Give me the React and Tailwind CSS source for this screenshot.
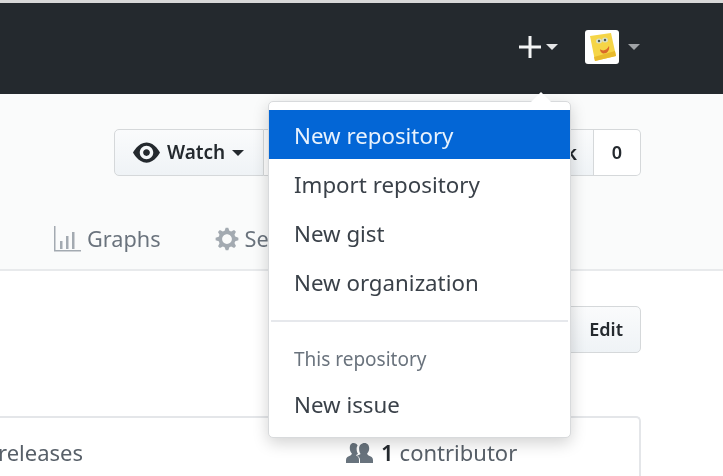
const font = { fontFamily: '"Noto Sans", "Open Sans", sans-serif' };

function Caret({ className }) {
  return <span className={"inline-block w-0 h-0 border-x-[6px] border-x-transparent border-t-[6px] " + className} />;
}

function Plus() {
  return (
    <svg width="22" height="22" viewBox="0 0 22 22" fill="#f4f5f5">
      <rect x="9.500" y="0" width="3" height="22" />
      <rect x="0" y="9.500" width="22" height="3" />
    </svg>
  );
}

function Eye() {
  return (
    <svg width="27" height="27" viewBox="0 0 16 16" fill="#24292e">
      <path d="M8.06 2C3 2 0 8 0 8s3 6 8.06 6C13 14 16 8 16 8s-3-6-7.94-6zM8 12c-2.2 0-4-1.78-4-4 0-2.2 1.8-4 4-4 2.22 0 4 1.8 4 4 0 2.22-1.78 4-4 4zm2-4c0 1.11-.89 2-2 2-1.11 0-2-.89-2-2 0-1.11.89-2 2-2 1.11 0 2 .89 2 2z" />
    </svg>
  );
}

function Bars() {
  return (
    <svg width="27" height="26" viewBox="0 0 27 26" fill="#a3aab1">
      <path d="M0 0h1.5v24H27v1.5H0z" />
      <rect x="6" y="15" width="2.5" height="8" />
      <rect x="12" y="10" width="2.5" height="13" />
      <rect x="18" y="6" width="2.5" height="17" />
    </svg>
  );
}

function Gear() {
  return (
    <svg width="24" height="26" viewBox="0 0 14 16" fill="#a3aab1">
      <path d="M14 8.77v-1.6l-1.94-.64-.45-1.09.88-1.84-1.13-1.13-1.81.91-1.09-.45-.69-1.92h-1.6l-.63 1.94-1.11.45-1.84-.88-1.13 1.13.91 1.81-.45 1.09L0 7.23v1.59l1.94.64.45 1.09-.88 1.84 1.13 1.13 1.81-.91 1.09.45.69 1.92h1.59l.63-1.94 1.11-.45 1.84.88 1.13-1.13-.92-1.81.47-1.09L14 8.75v.02zM7 11c-1.66 0-3-1.34-3-3s1.34-3 3-3 3 1.34 3 3-1.34 3-3 3z" />
    </svg>
  );
}

function People() {
  return (
    <svg width="27" height="22" viewBox="0 0 27 22" fill="#68737d">
      <path d="M18.500 1c3 0 4.700 2.300 4.700 5.300 0 2.500-.9 4-2 5 0 1.200.4 1.700 1.400 2.100 2.200.9 4.400 1.900 4.400 4.600V21H14v-3c0-2.400-1.400-3.700-3-4.600 1.300-.2 2.500-.7 3.600-1.400-.9-1.200-1.500-3-1.500-5.500C13.100 3.300 15.500 1 18.500 1z" />
      <path d="M7.500 1c2.100 0 3.500 1 4.100 2.500-.7 1-1 2-1 3 0 2.500.6 4.300 1.500 5.500-1.100.4-2 .9-2 1.400 2.300.8 2.900 2.300 2.900 4.600v3H0v-3c0-2.700 2.200-3.700 4.400-4.600 1-.4 1.400-.9 1.400-2.100-1.100-1-2-2.500-2-5C3.800 3.300 4.700 1 7.500 1z" />
    </svg>
  );
}

function Avatar() {
  return (
    <div className="w-[34px] h-[34px] rounded-[3px] bg-white flex items-center justify-center overflow-hidden">
      <svg width="30" height="30" viewBox="0 0 30 30">
        <path d="M3 4 L24 1 L29 24 L8 29 Z" fill="#f5d547" />
        <path d="M8 29 L29 24 L28 19 L7 25 Z" fill="#e8b92c" />
        <ellipse cx="12" cy="9" rx="3" ry="2.500" fill="#d9dfc8" />
        <ellipse cx="18" cy="8" rx="3" ry="2.500" fill="#d9dfc8" />
        <circle cx="12" cy="9" r="1.200" fill="#4a5a50" />
        <circle cx="18" cy="8" r="1.200" fill="#4a5a50" />
        <path d="M13 17 C16 20 20 18 22 14 C23 18 20 22 16 21.500 C14 21 13 19 13 17 Z" fill="#d9682a" />
      </svg>
    </div>
  );
}

function MenuItem({ children, active }) {
  return (
    <div className={"h-[49px] pl-[25px] pt-[2px] flex items-center text-[22.3px] " + (active ? "bg-[#0366d6] text-[#e8f2fd]" : "text-[#3a4149]")}>
      {children}
    </div>
  );
}

const btn = "bg-gradient-to-b from-[#fafbfc] to-[#eff3f6] border border-[#d5d8da] flex items-center text-[#24292e] font-semibold";

export default function App() {
  return (
    <div className="relative w-[723px] h-[476px] overflow-hidden bg-white blur-[0.4px]" style={font}>
      <div className="h-[3px] bg-[#d8d8d8]" />
      <header className="h-[91px] bg-[#24292e] flex items-center justify-end pr-[83px] pb-[3px]">
        <Plus />
        <Caret className="border-t-[#e4e5e6] ml-[5px] mr-[27px]" />
        <Avatar />
        <Caret className="border-t-[#a0a3a6] ml-[9px]" />
      </header>

      <section className="h-[177px] bg-[#fafbfb] border-b-2 border-[#e8eaec] flex flex-col">
        <div className="flex justify-end pr-[82px] pt-[35px] h-[111px]">
          <div className={btn + " h-[47px] w-[150px] rounded-l-[5px] pl-[18px] gap-[7px] text-[19px]"}>
            <Eye />
            <span>Watch</span>
            <Caret className="border-t-[#24292e]" />
          </div>
          <div className="h-[47px] w-[60px] bg-white border-y border-r border-[#d5d8da]" />
          <div className={btn + " h-[47px] w-[110px] border-l-0 text-[20px]"} />
          <div className="h-[47px] w-[60px] bg-white border-y border-r border-[#d5d8da]" />
          <div className={btn + " h-[47px] w-[100px] border-l-0 justify-end pr-[16px] text-[20px]"}>Fork</div>
          <div className="h-[47px] w-[47px] bg-white border-y border-r border-[#d5d8da] rounded-r-[5px] flex items-center justify-center font-semibold text-[18px] text-[#24292e]">
            0
          </div>
        </div>
        <nav className="flex items-center pl-[54px] pt-[18px] text-[21.7px] text-[#6a737d]">
          <Bars />
          <span className="ml-[6px]">Graphs</span>
          <span className="ml-[54px]"><Gear /></span>
          <span className="ml-[6px]">Settings</span>
        </nav>
      </section>

      <main>
        <div className="flex justify-end pr-[82px] pt-[35px]">
          <div className={btn + " h-[47px] w-[120px] rounded-[5px] justify-end pr-[17px] text-[18px]"}>Edit</div>
        </div>
        <div className="mt-[63px] mr-[82px] -ml-[10px] h-[80px] rounded-tr-[5px] border-t-2 border-r-2 border-[#e4e6e9] flex items-start pt-[18px] text-[22px] text-[#586069]">
          <span className="w-[356px] text-right pr-[263px] whitespace-nowrap">releases</span>
          <span className="flex items-center">
            <People />
            <span className="ml-[8px] font-semibold text-[#24292e]">1</span>
            <span className="ml-[6px]">contributor</span>
          </span>
        </div>
      </main>

      <div className="absolute left-[268px] top-[101px] w-[303px] h-[337px] bg-white rounded-[5px] border border-[#d8dadc] shadow-[0_5px_16px_rgba(0,0,0,0.18)] pt-[8px]">
        <div className="absolute -top-[10px] left-[262px] w-0 h-0 border-x-[10px] border-x-transparent border-b-[10px] border-b-white" />
        <MenuItem active>New repository</MenuItem>
        <MenuItem>Import repository</MenuItem>
        <MenuItem>New gist</MenuItem>
        <MenuItem>New organization</MenuItem>
        <div className="mt-[14px] mx-[2px] h-[2px] bg-[#e6e8ec]" />
        <div className="pl-[25px] mt-[23px] text-[19px] leading-[28px] text-[#6a737d]">This repository</div>
        <div className="mt-[6px]">
          <MenuItem>New issue</MenuItem>
        </div>
      </div>
    </div>
  );
}
